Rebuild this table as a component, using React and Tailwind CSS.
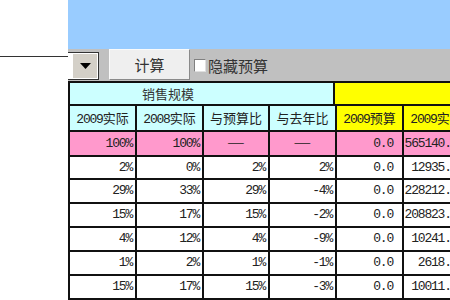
import React from "react";

const mono = "font-['Liberation_Mono',monospace] text-[13px] tracking-[-1.2px]";
const cjk = "font-['Noto_Sans_CJK_SC',sans-serif]";

const widths = ["w-[67px]", "w-[67px]", "w-[66px]", "w-[67px]", "w-[67px]", "w-[67px]"];
const pads = ["pr-[3px]", "pr-[3px]", "pr-[3px]", "pr-[3px]", "pr-[9px]", "pr-[5px]"];

const rows = [
  ["2%", "0%", "2%", "2%", "0.0", "12935.42"],
  ["29%", "33%", "29%", "-4%", "0.0", "228212.10"],
  ["15%", "17%", "15%", "-2%", "0.0", "208823.55"],
  ["4%", "12%", "4%", "-9%", "0.0", "10241.36"],
  ["1%", "2%", "1%", "-1%", "0.0", "2618.20"],
  ["15%", "17%", "15%", "-3%", "0.0", "10011.84"],
];

const heights = ["h-[23px]", "h-[24px]", "h-[24px]", "h-[24px]", "h-[24px]", "h-[24px]"];

function HeadCell({ num, zh, w, bg }) {
  return (
    <div className={`${w} shrink-0 h-full border-r-2 border-[#111] ${bg} flex items-center justify-center text-[#222] overflow-hidden whitespace-nowrap`}>
      <span className="leading-[16px]">
        <span className={mono}>{num}</span>
        <span className={`${cjk} text-[13px]`}>{zh}</span>
      </span>
    </div>
  );
}

function NumCell({ v, w, pad, bg = "bg-white" }) {
  return (
    <div className={`${w} shrink-0 h-full border-r-2 border-[#111] ${bg} flex items-center justify-end ${pad} text-[#222] overflow-hidden whitespace-nowrap`}>
      <span className={`${mono} leading-[16px]`}>{v}</span>
    </div>
  );
}

function DashCell({ w }) {
  return (
    <div className={`${w} shrink-0 h-full border-r-2 border-[#111] bg-[#ff99cc] flex items-center justify-center text-[#222]`}>
      <span className={`${cjk} text-[10px] leading-none pb-[3px]`}>——</span>
    </div>
  );
}

export default function App() {
  return (
    <div className="flex w-[450px] h-[300px] overflow-hidden bg-white">
      {/* left white strip with combobox edge */}
      <div className="w-[68px] shrink-0 flex flex-col">
        <div className="h-[56px]" />
        <div className="border-t border-[#333]" />
      </div>

      <div className="flex flex-col w-[402px] shrink-0">
        <div className="h-[53px] bg-[#99ccff] w-[450px]" />

        {/* toolbar */}
        <div className="h-[35px] bg-[#c0c0c0] flex items-start w-[450px]">
          <div className="mt-[3px] w-[31px] h-[28px] bg-white border-t border-r border-b border-[#333] flex items-center justify-end pr-[1px]">
            <div className="w-[24px] h-[24px] bg-[#d4d0c8] flex items-center justify-center">
              <svg width="11" height="6" viewBox="0 0 11 6">
                <path d="M0 0 H11 L5.5 6 Z" fill="#000" />
              </svg>
            </div>
          </div>
          <div className="ml-[10px] w-[81px] h-[31px] bg-[#efefef] border border-t-[#fafafa] border-l-[#fafafa] border-r-[#8a8a8a] border-b-[#8a8a8a] flex items-center justify-center">
            <span className={`${cjk} text-[15px] text-[#333] leading-none`}>计算</span>
          </div>
          <div className="ml-[4px] mt-[10px] w-[12px] h-[13px] bg-white border border-[#808080] border-b-[#e0e0e0] border-r-[#e0e0e0]" />
          <span className={`${cjk} ml-[2px] mt-[9px] text-[15px] text-[#333] leading-none`}>隐藏预算</span>
        </div>

        {/* table */}
        <div className="flex flex-col w-[450px] border-l-2 border-[#111]">
          {/* group header */}
          <div className="flex h-[25px] border-t-2 border-b-2 border-[#111]">
            <div className="w-[265px] shrink-0 h-full bg-[#ccffff] border-r-2 border-[#111] flex items-center justify-center pr-[67px]">
              <span className={`${cjk} text-[13px] text-[#333] leading-none`}>销售规模</span>
            </div>
            <div className="flex-1 h-full bg-[#ffff00]" />
          </div>
          {/* column headers */}
          <div className="flex h-[26px] border-b-2 border-[#111]">
            <HeadCell num="2009" zh="实际" w={widths[0]} bg="bg-[#ccffff]" />
            <HeadCell num="2008" zh="实际" w={widths[1]} bg="bg-[#ccffff]" />
            <HeadCell num="" zh="与预算比" w={widths[2]} bg="bg-[#ccffff]" />
            <HeadCell num="" zh="与去年比" w={widths[3]} bg="bg-[#ccffff]" />
            <HeadCell num="2009" zh="预算" w={widths[4]} bg="bg-[#ffff00]" />
            <HeadCell num="2009" zh="实际" w={widths[5]} bg="bg-[#ffff00]" />
          </div>
          {/* total row */}
          <div className="flex h-[25px] border-b-2 border-[#111]">
            <NumCell v="100%" w={widths[0]} pad={pads[0]} bg="bg-[#ff99cc]" />
            <NumCell v="100%" w={widths[1]} pad={pads[1]} bg="bg-[#ff99cc]" />
            <DashCell w={widths[2]} />
            <DashCell w={widths[3]} />
            <NumCell v="0.0" w={widths[4]} pad={pads[4]} bg="bg-[#ff99cc]" />
            <NumCell v="565140.36" w={widths[5]} pad={pads[5]} bg="bg-[#ff99cc]" />
          </div>
          {rows.map((r, i) => (
            <div key={i} className={`flex ${heights[i]} border-b-2 border-[#111] shrink-0`}>
              {r.map((v, j) => (
                <NumCell key={j} v={v} w={widths[j]} pad={pads[j]} />
              ))}
            </div>
          ))}
        </div>
      </div>
    </div>
  );
}
